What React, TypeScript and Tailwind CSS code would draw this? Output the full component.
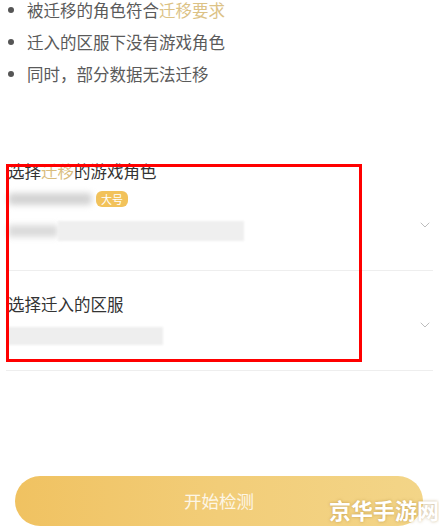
import { ChevronDown } from "lucide-react";

const BULLETS = [
  { text: "被迁移的角色符合", link: "迁移要求" },
  { text: "迁入的区服下没有游戏角色" },
  { text: "同时，部分数据无法迁移" },
];

const font = { fontFamily: '"Noto Sans CJK SC", "Noto Sans", sans-serif' };

export default function App() {
  return (
    <div className="relative h-[528px] w-[439px] overflow-hidden bg-white" style={font}>
      <ul className="mt-[-6px] flex flex-col">
        {BULLETS.map((b) => (
          <li key={b.text} className="flex h-8 items-center gap-[13px] pl-2 text-[16.5px] text-[#5a5a5a]">
            <span className="h-[6px] w-[6px] rounded-full bg-[#555]" />
            <span>
              {b.text}
              {b.link && <span className="text-[#dcc285]">{b.link}</span>}
            </span>
          </li>
        ))}
      </ul>

      <div className="mt-[66px] px-[6px]">
        <div className="flex h-[115px] items-start border-b border-[#eeeeee]">
          <div className="flex-1 pl-[2px] pt-[3px]">
            <p className="text-[16.5px] leading-6 text-[#333]">
              选择<span className="text-[#d9bc7c]">迁移</span>的游戏角色
            </p>
            <div className="mt-[8px] flex items-center gap-[4px]">
              <div className="h-[12px] w-[84px] rounded bg-[#d3d3d3] blur-[3px]" />
              <span className="rounded-[6px] bg-[#f2c25a] px-[5px] text-[11px] leading-[16px] text-white">大号</span>
            </div>
            <div className="mt-[14px] flex h-[20px] w-[236px] items-center">
              <div className="h-[12px] w-[50px] bg-[#dadada] blur-[3px]" />
              <div className="h-[20px] flex-1 bg-[#efefef] blur-[1px]" />
            </div>
          </div>
          <ChevronDown className="mt-[61px] h-[16px] w-[16px] text-[#b8b8b8]" strokeWidth={1.4} />
        </div>

        <div className="flex h-[100px] items-start border-b border-[#eeeeee]">
          <div className="flex-1 pl-[2px] pt-[21px]">
            <p className="text-[16.5px] leading-6 text-[#333]">选择迁入的区服</p>
            <div className="mt-[11px] h-[18px] w-[155px] bg-[#eeeeee] blur-[1px]" />
          </div>
          <ChevronDown className="mt-[46px] h-[16px] w-[16px] text-[#b8b8b8]" strokeWidth={1.4} />
        </div>
      </div>

      <div className="mt-[105px] px-[15px]">
        <button
          type="button"
          className="flex h-[50px] w-[408px] items-center justify-center rounded-full bg-gradient-to-r from-[#f0c261] via-[#f2cd78] to-[#f3d588] text-[17.5px] text-[#fdf6e6]"
        >
          开始检测
        </button>
      </div>

      <div className="absolute left-[6px] top-[164px] h-[198px] w-[356px] border-[3px] border-[#ff0000]" />

      <div className="absolute left-[329px] top-[495px] text-[22px] font-bold leading-[28px] text-white [text-shadow:0_0_3px_rgba(150,110,30,0.5)]">
        京华手游网
      </div>
    </div>
  );
}
